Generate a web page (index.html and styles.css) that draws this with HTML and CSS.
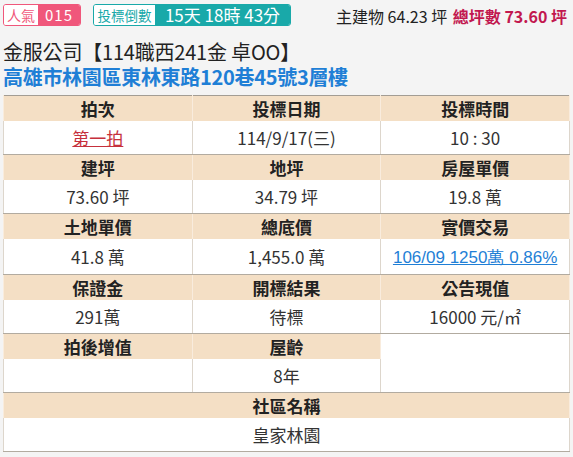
FILE: index.html
```html
<!DOCTYPE html>
<html lang="zh-Hant">
<head>
<meta charset="utf-8">
<link rel="stylesheet" href="styles.css">
</head>
<body>
<div class="wrap">
  <div class="topbar">
    <div class="badge pink"><span class="lbl">人氣</span><span class="val">015</span></div>
    <div class="badge teal"><span class="lbl">投標倒數</span><span class="val">15天 18時 43分</span></div>
    <div class="area"><span class="main">主建物 64.23 坪</span> <span class="total">總坪數 73.60 坪</span></div>
  </div>
  <div class="title">金服公司【114職西241金 卓OO】</div>
  <div class="addr">高雄市林園區東林東路120巷45號3層樓</div>
  <table class="info">
    <tr class="hd"><th>拍次</th><th>投標日期</th><th>投標時間</th></tr>
    <tr class="dt"><td><a class="red">第一拍</a></td><td>114/9/17(三)</td><td>10 : 30</td></tr>
    <tr class="hd"><th>建坪</th><th>地坪</th><th>房屋單價</th></tr>
    <tr class="dt"><td>73.60 坪</td><td>34.79 坪</td><td>19.8 萬</td></tr>
    <tr class="hd"><th>土地單價</th><th>總底價</th><th>實價交易</th></tr>
    <tr class="dt"><td>41.8 萬</td><td>1,455.0 萬</td><td><a class="blue">106/09 1250萬 0.86%</a></td></tr>
    <tr class="hd"><th>保證金</th><th>開標結果</th><th>公告現值</th></tr>
    <tr class="dt"><td>291萬</td><td>待標</td><td>16000 元/㎡</td></tr>
    <tr class="hd"><th>拍後增值</th><th>屋齡</th><td class="blank" rowspan="2"></td></tr>
    <tr class="dt"><td></td><td>8年</td></tr>
    <tr class="hd"><th colspan="3">社區名稱</th></tr>
    <tr class="dt last"><td colspan="3">皇家林園</td></tr>
  </table>
</div>
</body>
</html>
```
FILE: styles.css
```css
html, body {
  margin: 0;
  padding: 0;
  background: #f4f4f4;
}
body {
  font-family: "Noto Sans CJK TC", "Noto Sans", sans-serif;
  color: #222;
}
.wrap {
  padding: 4px 3px 0 3px;
}
.topbar {
  display: flex;
  align-items: center;
  height: 22px;
}
.badge {
  display: flex;
  height: 22px;
  box-sizing: border-box;
  border-radius: 3px;
  font-size: 14px;
  line-height: 20px;
}
.badge .lbl {
  background: #fff;
  text-align: center;
  flex: none;
  border-radius: 2px 0 0 2px;
}
.badge .val {
  color: #fff;
  flex: 1;
  text-align: center;
  white-space: nowrap;
  border-radius: 0 2px 2px 0;
}
.pink {
  border: 1px solid #f0577b;
  width: 78px;
}
.pink .lbl {
  color: #f0577b;
  width: 34px;
}
.pink .val {
  background: #f0577b;
  font-size: 15px;
  letter-spacing: 1px;
}
.teal {
  border: 1px solid #19a9a9;
  margin-left: 12px;
  width: 198px;
}
.teal .lbl {
  color: #19a9a9;
  width: 61px;
  font-size: 13.5px;
}
.teal .val {
  background: #19a9a9;
  font-size: 17px;
  line-height: 20px;
}
.area {
  margin-left: auto;
  font-size: 16px;
  line-height: 20px;
  padding-right: 3px;
  padding-top: 2px;
  white-space: nowrap;
}
.area .main {
  color: #222;
}
.area .total {
  color: #c2184f;
  font-weight: bold;
  margin-left: 2px;
}
.title {
  margin-top: 13px;
  font-size: 20px;
  line-height: 25px;
  color: #222;
  letter-spacing: -0.2px;
}
.addr {
  font-size: 20px;
  line-height: 25px;
  color: #1f7fd6;
  font-weight: bold;
  letter-spacing: -0.3px;
}
.info {
  margin-top: 6px;
  width: 567px;
  border-collapse: collapse;
  border: 1px solid #a39d94;
  background: #fff;
  table-layout: fixed;
  font-size: 17px;
}
.info th, .info td {
  text-align: center;
  padding: 0;
  border-left: 1px solid #ddd6cc;
  border-right: 1px solid #ddd6cc;
}
.info tr.hd th {
  background: #f4dfc5;
  height: 25px;
  line-height: 25px;
  font-weight: bold;
  color: #222;
  border-left-color: #f9ecdd;
  border-right-color: #f9ecdd;
}
.info tr.dt td {
  height: 33px;
  line-height: 33px;
  color: #333;
  border-bottom: 1px solid #b2aba0;
}
.info td.blank {
  background: #fff;
  border-bottom: 1px solid #b2aba0;
}
.red {
  color: #c6303c;
  text-decoration: underline;
}
.blue {
  color: #1f7fd6;
  text-decoration: underline;
  font-family: "Liberation Sans", Arial, sans-serif;
  font-size: 17px;
}
```
